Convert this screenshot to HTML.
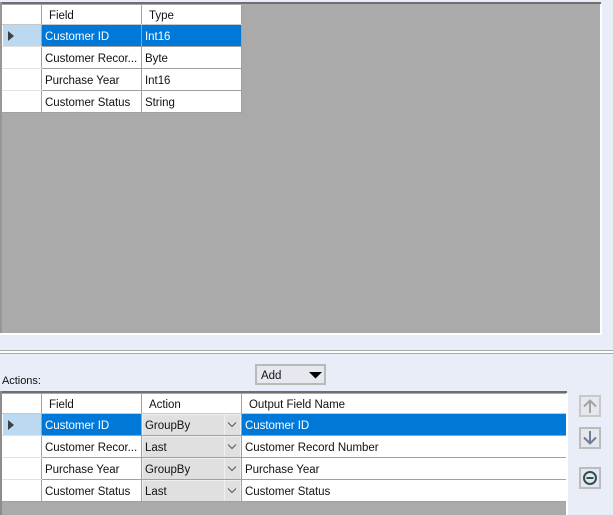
<!DOCTYPE html>
<html><head><meta charset="utf-8"><style>
html,body{margin:0;padding:0}
body{width:613px;height:515px;position:relative;overflow:hidden;background:#e9edf8;font:12px/16px "Liberation Sans",sans-serif;color:#111}
div{position:absolute;box-sizing:border-box}
.t{white-space:nowrap;font-size:11.5px;letter-spacing:-.03px;margin-top:1px}
.w{color:#fff}
.b{background:#a0a0a0}
</style></head><body>
<div style="left:0;top:2px;width:600px;height:331px;background:#aaa"></div>
<div style="left:0;top:2px;width:601px;height:2px;background:#6e6e6e"></div>
<div style="left:0;top:2px;width:2px;height:331px;background:#969696"></div>
<div style="left:600px;top:4px;width:2px;height:330px;background:#fff"></div>
<div style="left:0;top:333px;width:602px;height:2px;background:#fff"></div>

<!-- top grid -->
<div style="left:2px;top:5px;width:240px;height:108px;background:#fff"></div>
<div style="left:3px;top:25px;width:38px;height:21px;background:#bbdaf2"></div>
<div style="left:42px;top:25px;width:99px;height:21px;background:#0078d7"></div>
<div style="left:142px;top:25px;width:99px;height:21px;background:#0078d7"></div>
<div class="b" style="left:41px;top:5px;width:1px;height:108px"></div>
<div class="b" style="left:141px;top:5px;width:1px;height:108px"></div>
<div class="b" style="left:241px;top:5px;width:1px;height:108px"></div>
<div style="left:2px;top:24px;width:240px;height:1px;background:#c8c8c8"></div>
<div style="left:2px;top:46px;width:40px;height:1px;background:#e2e2e2"></div>
<div style="left:2px;top:68px;width:40px;height:1px;background:#e2e2e2"></div>
<div style="left:2px;top:90px;width:40px;height:1px;background:#e2e2e2"></div>
<div class="b" style="left:42px;top:46px;width:200px;height:1px"></div>
<div class="b" style="left:42px;top:68px;width:200px;height:1px"></div>
<div class="b" style="left:42px;top:90px;width:200px;height:1px"></div>
<div class="b" style="left:2px;top:112px;width:240px;height:1px"></div>
<svg style="position:absolute;left:7px;top:30px" width="8" height="12"><path d="M1 1L7 6L1 11Z" fill="#404040"/></svg>
<div class="t" style="left:49px;top:7px">Field</div>
<div class="t" style="left:149px;top:7px">Type</div>
<div class="t w" style="left:45px;top:28px">Customer ID</div>
<div class="t w" style="left:145px;top:28px">Int16</div>
<div class="t" style="left:45px;top:50px">Customer Recor...</div>
<div class="t" style="left:145px;top:50px">Byte</div>
<div class="t" style="left:45px;top:72px">Purchase Year</div>
<div class="t" style="left:145px;top:72px">Int16</div>
<div class="t" style="left:45px;top:94px">Customer Status</div>
<div class="t" style="left:145px;top:94px">String</div>

<!-- splitter -->
<div style="left:0;top:350px;width:613px;height:1px;background:#a8a8a8"></div>
<div style="left:0;top:351px;width:613px;height:2px;background:#fff"></div>
<div style="left:0;top:353px;width:613px;height:1px;background:#a8a8a8"></div>

<div class="t" style="left:2px;top:372px;font-size:11px">Actions:</div>

<!-- add button -->
<div style="left:255px;top:364px;width:71px;height:21px;background:#e6e8ef;border:2px solid #b9b9b9"></div>
<div class="t" style="left:261px;top:367px">Add</div>
<svg style="position:absolute;left:309px;top:372px" width="14" height="7"><path d="M0 0H13L6.500 6.500Z" fill="#000"/></svg>

<!-- bottom grid -->
<div style="left:0;top:391px;width:566px;height:124px;background:#aaa"></div>
<div style="left:0;top:391px;width:567px;height:2px;background:#6e6e6e"></div>
<div style="left:0;top:391px;width:2px;height:124px;background:#8c8c8c"></div>
<div style="left:566px;top:393px;width:2px;height:122px;background:#fff"></div>
<div style="left:2px;top:394px;width:564px;height:108px;background:#fff"></div>
<div style="left:3px;top:414px;width:38px;height:21px;background:#bbdaf2"></div>
<div style="left:42px;top:414px;width:99px;height:21px;background:#0078d7"></div>
<div style="left:242px;top:414px;width:324px;height:21px;background:#0078d7"></div>
<div class="b" style="left:41px;top:394px;width:1px;height:108px"></div>
<div class="b" style="left:141px;top:394px;width:1px;height:108px"></div>
<div class="b" style="left:241px;top:394px;width:1px;height:108px"></div>
<div style="left:2px;top:413px;width:564px;height:1px;background:#c8c8c8"></div>
<div style="left:2px;top:435px;width:40px;height:1px;background:#e2e2e2"></div>
<div style="left:2px;top:457px;width:40px;height:1px;background:#e2e2e2"></div>
<div style="left:2px;top:479px;width:40px;height:1px;background:#e2e2e2"></div>
<div class="b" style="left:42px;top:435px;width:524px;height:1px"></div>
<div class="b" style="left:42px;top:457px;width:524px;height:1px"></div>
<div class="b" style="left:42px;top:479px;width:524px;height:1px"></div>
<div class="b" style="left:2px;top:501px;width:564px;height:1px"></div>

<!-- combo cells -->
<div style="left:142px;top:414px;width:99px;height:21px;background:#f0f0f0"></div>
<div style="left:142px;top:436px;width:99px;height:21px;background:#f0f0f0"></div>
<div style="left:142px;top:458px;width:99px;height:21px;background:#f0f0f0"></div>
<div style="left:142px;top:480px;width:99px;height:21px;background:#f0f0f0"></div>
<div style="left:143px;top:415px;width:81px;height:20px;background:#e0e0e0"></div>
<div style="left:225px;top:415px;width:15px;height:20px;background:#e0e0e0"></div>
<div style="left:143px;top:437px;width:81px;height:20px;background:#e0e0e0"></div>
<div style="left:225px;top:437px;width:15px;height:20px;background:#e0e0e0"></div>
<div style="left:143px;top:459px;width:81px;height:20px;background:#e0e0e0"></div>
<div style="left:225px;top:459px;width:15px;height:20px;background:#e0e0e0"></div>
<div style="left:143px;top:481px;width:81px;height:20px;background:#e0e0e0"></div>
<div style="left:225px;top:481px;width:15px;height:20px;background:#e0e0e0"></div>
<svg style="position:absolute;left:226px;top:415px" width="14" height="88" fill="none" stroke="#555" stroke-width="1"><path d="M2 7.500L6 11.500L10 7.500M2 29.500L6 33.500L10 29.500M2 51.500L6 55.500L10 51.500M2 73.500L6 77.500L10 73.500"/></svg>

<svg style="position:absolute;left:7px;top:419px" width="8" height="12"><path d="M1 1L7 6L1 11Z" fill="#404040"/></svg>
<div class="t" style="left:49px;top:396px">Field</div>
<div class="t" style="left:149px;top:396px">Action</div>
<div class="t" style="left:249px;top:396px">Output Field Name</div>
<div class="t w" style="left:45px;top:417px">Customer ID</div>
<div class="t" style="left:145px;top:417px">GroupBy</div>
<div class="t w" style="left:245px;top:417px">Customer ID</div>
<div class="t" style="left:45px;top:439px">Customer Recor...</div>
<div class="t" style="left:145px;top:439px">Last</div>
<div class="t" style="left:245px;top:439px">Customer Record Number</div>
<div class="t" style="left:45px;top:461px">Purchase Year</div>
<div class="t" style="left:145px;top:461px">GroupBy</div>
<div class="t" style="left:245px;top:461px">Purchase Year</div>
<div class="t" style="left:45px;top:483px">Customer Status</div>
<div class="t" style="left:145px;top:483px">Last</div>
<div class="t" style="left:245px;top:483px">Customer Status</div>

<!-- side buttons -->
<div style="left:579px;top:395px;width:22px;height:22px;background:#e6e8ef;border:2px solid #c8c8c8"></div>
<svg style="position:absolute;left:579px;top:395px" width="22" height="22" fill="none" stroke="#a3a3a3" stroke-width="2"><path d="M11 18V6M5 11.500L11 5.500L17 11.500"/></svg>
<div style="left:579px;top:427px;width:22px;height:22px;background:#e6e8ef;border:2px solid #bcbcbc"></div>
<svg style="position:absolute;left:579px;top:427px" width="22" height="22" fill="none" stroke="#6c7d98" stroke-width="2"><path d="M11 4V16M5 10.500L11 16.500L17 10.500"/></svg>
<div style="left:579px;top:467px;width:22px;height:22px;background:#e6e8ef;border:2px solid #bcbcbc"></div>
<svg style="position:absolute;left:579px;top:467px" width="22" height="22" fill="none" stroke="#2f4f55" stroke-width="2"><circle cx="11" cy="11" r="6"/><path d="M7.500 11H14.500"/></svg>
</body></html>
